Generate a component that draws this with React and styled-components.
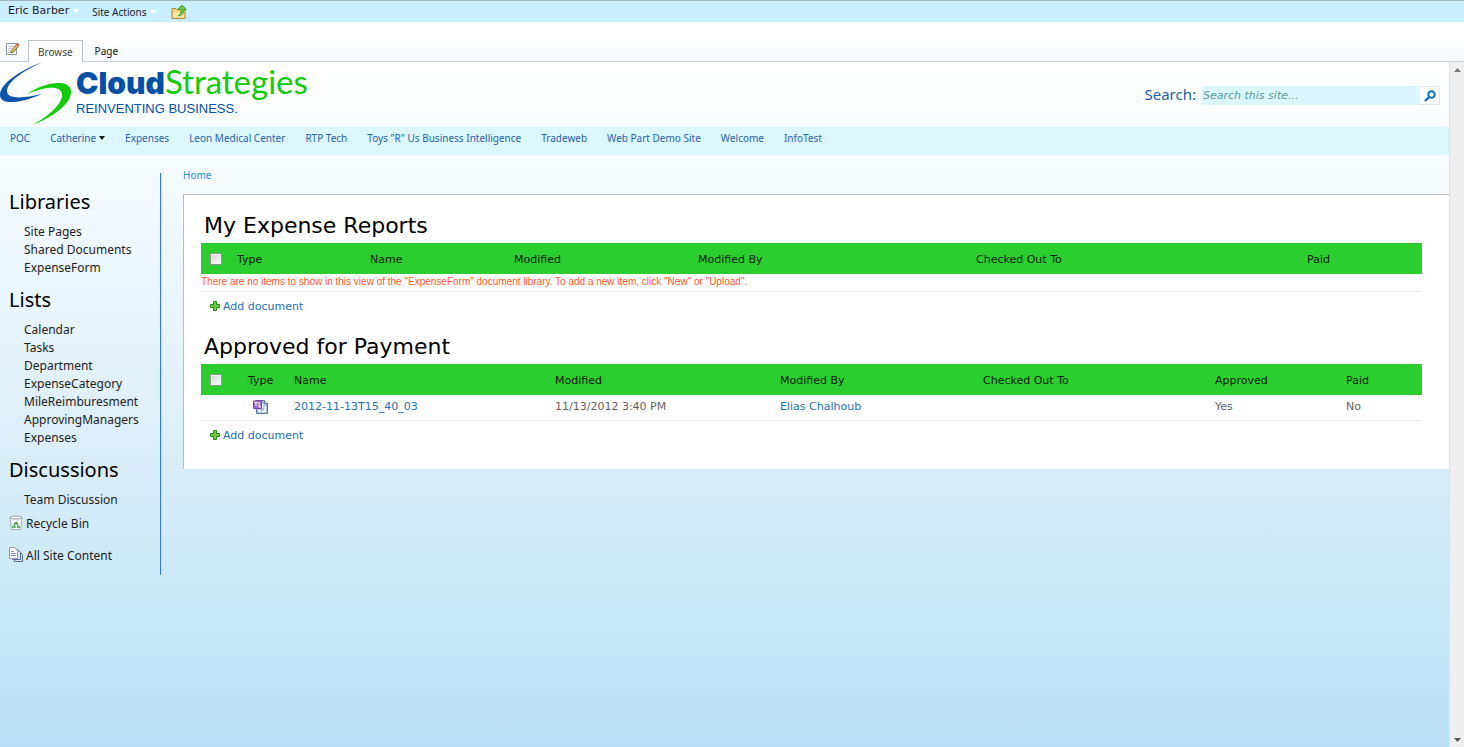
import React from "react";
import styled, { createGlobalStyle } from "styled-components";

const segoe = `"Noto Sans", "Open Sans", sans-serif`;
const verdana = `"DejaVu Sans", sans-serif`;

const GlobalStyle = createGlobalStyle`
  * { box-sizing: border-box; }
  body { margin: 0; font-family: ${segoe}; color: #1c1c1c; }
  a { text-decoration: none; color: inherit; }
  ul { list-style: none; margin: 0; padding: 0; }
  h2 { margin: 0; font-weight: 400; }
  svg { display: block; flex: none; }
`;

const Shell = styled.div`
  display: flex;
  flex-direction: column;
  min-height: 100vh;
`;

const TopBar = styled.header`
  display: flex;
  align-items: center;
  height: 22px;
  padding: 0 8px;
  gap: 13px;
  background: #c8eeff;
  border-top: 1px solid #a3b4bd;
`;

const MenuButton = styled.button`
  display: flex;
  align-items: center;
  gap: 4px;
  padding: ${(p) => (p.$wide ? "0 0 2px" : "0")};
  border: 0;
  background: none;
  color: #1d1d2b;
  font: ${(p) => (p.$wide ? `11px/16px ${verdana}` : `10px/16px ${segoe}`)};
  white-space: nowrap;
`;

const IconButton = styled.button`
  display: flex;
  padding: 0;
  border: 0;
  background: none;
`;

const UpButton = styled(IconButton)`
  padding-left: 2px;
`;

const Ribbon = styled.nav`
  display: flex;
  align-items: flex-end;
  height: 40px;
  padding-left: 5px;
  background: linear-gradient(#ffffff 40%, #f5f7f9);
  border-bottom: 1px solid #c9d2da;
`;

const EditSlot = styled.div`
  width: 23px;
  padding-bottom: 4px;
`;

const Tab = styled.button`
  height: 22px;
  padding: 1px 9px 0;
  margin-bottom: ${(p) => (p.$active ? "-1px" : "0")};
  margin-right: 2px;
  border: 1px solid ${(p) => (p.$active ? "#b9c1c9" : "transparent")};
  border-bottom: 0;
  background: ${(p) => (p.$active ? "#ffffff" : "none")};
  color: ${(p) => (p.$active ? "#444444" : "#111111")};
  font: 10px/18px ${segoe};
`;

const Body = styled.div`
  display: flex;
  flex: 1;
`;

const Page = styled.div`
  flex: 1;
  min-width: 0;
  background: linear-gradient(#ffffff 0, #f6fbff 16%, #d8edf9 60%, #b9e0f4 100%);
`;

const ScrollTrack = styled.div`
  display: flex;
  flex-direction: column;
  justify-content: space-between;
  align-items: center;
  width: 15px;
  padding: 6px 0 5px;
  background: #efefef;
  border-left: 1px solid #e0e3e6;
`;

const Masthead = styled.div`
  display: flex;
  justify-content: space-between;
  height: 65px;
  padding-right: 9px;
`;

const Brand = styled.a`
  display: flex;
  gap: 4px;
`;

const BrandText = styled.div`
  padding-top: 1px;
`;

const BrandName = styled.div`
  display: flex;
  align-items: baseline;
  height: 36px;
  font: 33px/36px Lato, sans-serif;
  color: #12cc0a;
`;

const BrandStrong = styled.span`
  font: 900 30px/36px Inter, sans-serif;
  color: #0450a4;
`;

const Tagline = styled.div`
  font: 13px/20px "Liberation Sans", sans-serif;
  color: #0450a4;
`;

const SearchForm = styled.form`
  display: flex;
  align-items: center;
  align-self: flex-start;
  padding-top: 20px;
`;

const SearchLabel = styled.label`
  margin-right: 6px;
  padding-bottom: 2px;
  font: 15px/24px ${segoe};
  color: #1f5fa8;
`;

const SearchBox = styled.input`
  width: 218px;
  height: 19px;
  padding: 0 1px;
  border: 0;
  border-radius: 0;
  background: #dbf6ff;
  font: italic 11px/19px ${verdana};
  &::placeholder { color: #5c9a9c; opacity: 1; }
`;

const SearchButton = styled.button`
  display: flex;
  align-items: center;
  justify-content: center;
  width: 20px;
  height: 19px;
  padding: 1px 0 0;
  border: 1px solid #e2e6e9;
  border-left: 0;
  background: #fafcfd;
`;

const SiteNav = styled.nav`
  display: flex;
  gap: 20px;
  height: 28px;
  padding: 0 10px;
  background: #dcf7ff;
  color: #2a62a8;
  font: 10px/22px ${segoe};
`;

const NavLink = styled.a`
  display: flex;
  align-items: center;
  gap: 3px;
  height: 22px;
  white-space: nowrap;
`;

const Columns = styled.div`
  display: flex;
  align-items: flex-start;
  gap: 22px;
  padding-top: 18px;
`;

const Sidebar = styled.aside`
  width: 161px;
  min-height: 402px;
  padding: 14px 0 0 9px;
  border-right: 1px solid #3b7fc0;
  box-shadow: 1px 0 0 #c4e0f4;
`;

const SideHeading = styled.h2`
  font: 20px/30px ${segoe};
  color: #000000;
`;

const SideList = styled.ul`
  padding: 6px 0 8px 15px;
  font: 12px/18px ${segoe};
`;

const SideItem = styled.li`
  white-space: nowrap;
`;

const SideTool = styled.a`
  display: flex;
  align-items: center;
  gap: 3px;
  height: 32px;
  font: 12px/18px ${segoe};
`;

const Tools = styled.div`
  margin-top: -9px;
`;

const Main = styled.main`
  flex: 1;
  min-width: 0;
`;

const Crumb = styled.a`
  display: block;
  height: 21px;
  font: 10px/4px ${segoe};
  color: #1c90d0;
`;

const Panel = styled.div`
  padding: 15px 27px 18px 17px;
  background: #ffffff;
  border-top: 1px solid #bcbcbc;
  border-left: 1px solid #bcbcbc;
`;

const WebPart = styled.section`
  margin-bottom: ${(p) => (p.$last ? "0" : "9px")};
`;

const PartTitle = styled.h2`
  height: 33px;
  padding-left: 3px;
  font: 22px/32px ${verdana};
  color: #000000;
`;

const Grid = styled.table`
  width: 100%;
  table-layout: fixed;
  border-collapse: collapse;
  font: 11px/16px ${verdana};
`;

const HeadCell = styled.th`
  height: 31px;
  padding: 3px 0 0 8px;
  background: #2ccd2e;
  color: #06210a;
  font-weight: 400;
  text-align: left;
`;

const CheckCell = styled(HeadCell)`
  padding: 1px 0 0 9px;
`;

const Cell = styled.td`
  height: 26px;
  padding: 0 0 1px 8px;
  border-bottom: 1px solid #e9e9e9;
  color: ${(p) => (p.$link ? "#2470b3" : "#5f5f5f")};
`;

const TypeCell = styled(Cell)`
  padding: 0 0 0 13px;
`;

const EmptyCell = styled.td`
  height: 17px;
  padding: 0;
  border-bottom: 1px solid #e9e9e9;
  color: #ff5a2a;
  font: 10px/16px "Liberation Sans", sans-serif;
`;

const Check = styled.input`
  display: block;
  appearance: none;
  width: 12px;
  height: 12px;
  margin: 0;
  border: 1px solid #8d938f;
  background: linear-gradient(135deg, #cfd3d8, #fbfbfb);
  box-shadow: inset 0 0 0 1px #f4f4f4;
`;

const AddLink = styled.a`
  display: flex;
  align-items: center;
  gap: 3px;
  width: max-content;
  height: 30px;
  padding-left: 9px;
  color: #2470b3;
  font: 11px/16px ${verdana};
`;

const Caret = ({ color }) => (
  <svg width="6" height="4" viewBox="0 0 6 4"><path d="M0 0h6L3 4z" fill={color} /></svg>
);

const FolderUp = () => (
  <svg width="16" height="16" viewBox="0 0 16 16">
    <path d="M1 4.500h4l1 1h8v9H1z" fill="#f3cf78" stroke="#b08a3c" />
    <path d="M2 8h11v6H2z" fill="#fbe3a0" />
    <path d="M11 1l4.500 4.500H13c0 4-2 6-6 6.500 2-1.500 3-3 3-6.500H6.500z" fill="#6cc844" stroke="#3f9a2e" strokeWidth=".8" />
  </svg>
);

const EditPage = () => (
  <svg width="16" height="16" viewBox="0 0 16 16">
    <path d="M1.500 2.500h10v11h-10z" fill="#ffffff" stroke="#8b9bb0" />
    <path d="M3 5.500h6M3 7.500h4M3 9.500h3M3 11.500h3" stroke="#c2cddb" />
    <path d="M11.500 3.500l2 1.500-5 6-2.500 1 .5-2.500z" fill="#f3c04c" stroke="#59503c" strokeWidth=".8" />
    <path d="M11.500 3.500l1-1.500 2 1.500-1 1.500z" fill="#d9534a" />
  </svg>
);

const LogoMark = () => (
  <svg width="72" height="64" viewBox="0 0 72 64">
    <path d="M43 0C20 8 0 22 0 33c0 11 22 8 42-1C25 36 7 38 7 29 7 20 24 8 43 0z" fill="#0b55a8" />
    <path d="M27 32C44 20 70 16 71 29c1 11-15 25-39 34C46 56 62 43 62 33c0-11-18-8-35-1z" fill="#14cc0c" />
  </svg>
);

const Magnifier = () => (
  <svg width="12" height="12" viewBox="0 0 12 12" fill="none" stroke="#1070b8">
    <circle cx="7.500" cy="4.500" r="3.200" strokeWidth="2" />
    <path d="M5 7L1 11" strokeWidth="2.400" />
  </svg>
);

const Plus = () => (
  <svg width="10" height="12" viewBox="0 0 10 12">
    <path d="M3.500 .5h3v3h3v3h-3v3h-3v-3h-3v-3h3z" fill="#6ccb45" stroke="#2b8a1c" />
  </svg>
);

const RecycleBin = () => (
  <svg width="14" height="18" viewBox="0 0 14 18">
    <path d="M1 2.500l1.500 12h9L13 2.500z" fill="#f1f5f7" stroke="#a3afb9" />
    <ellipse cx="7" cy="2.500" rx="6" ry="1.500" fill="#ffffff" stroke="#93a0ab" />
    <path d="M7 7l3 5H4z" fill="none" stroke="#3e9b3d" strokeWidth="1.500" strokeDasharray="3.500 1" />
  </svg>
);

const Documents = () => (
  <svg width="14" height="18" viewBox="0 0 14 18">
    <path d="M5.500 4.500h5l3 3v7h-8z" fill="#dce5f2" stroke="#56698c" />
    <path d="M3.500 2.500h5l3 3v7h-8z" fill="#dce5f2" stroke="#56698c" />
    <path d="M.5.500h5l3 3v8h-8z" fill="#ffffff" stroke="#8fa0ba" />
    <path d="M2 4.500h3M2 6.500h5M2 8.500h5" stroke="#6f9bd0" />
  </svg>
);

const FormFile = () => (
  <svg width="16" height="16" viewBox="0 0 16 16">
    <path d="M3.500 1.500h8l3 3v10h-11z" fill="#a9bfe3" stroke="#5b76a6" />
    <path d="M11.500 1.500v3h3" fill="#ffffff" stroke="#5b76a6" />
    <path d="M9.500 5v4M12 7v5M5 11.500h2v2M9 12.500h4" fill="none" stroke="#f7faff" strokeWidth="1.500" />
    <path d="M.500 2.500l2-1h6v8h-8z" fill="#a06cc6" stroke="#7c48a8" />
    <path d="M1.500 3.500h3M3 4v3M6 3v5h2" fill="none" stroke="#ffffff" />
  </svg>
);

const navItems = ["POC", "Catherine", "Expenses", "Leon Medical Center", "RTP Tech", 'Toys "R" Us Business Intelligence', "Tradeweb", "Web Part Demo Site", "Welcome", "InfoTest"];

const sideGroups = [
  { title: "Libraries", items: ["Site Pages", "Shared Documents", "ExpenseForm"] },
  { title: "Lists", items: ["Calendar", "Tasks", "Department", "ExpenseCategory", "MileReimburesment", "ApprovingManagers", "Expenses"] },
  { title: "Discussions", items: ["Team Discussion"] },
];

function ListTable({ label, columns, widths, children }) {
  return (
    <Grid>
      <colgroup>{widths.map((w, i) => <col key={i} width={w} />)}</colgroup>
      <thead>
        <tr>
          <CheckCell><Check type="checkbox" aria-label={`Select all in ${label}`} /></CheckCell>
          {columns.map((c) => <HeadCell key={c} scope="col">{c}</HeadCell>)}
        </tr>
      </thead>
      <tbody>{children}</tbody>
    </Grid>
  );
}

export default function App() {
  return (
    <Shell>
      <GlobalStyle />
      <TopBar>
        <MenuButton $wide>Eric Barber<Caret color="#ffffff" /></MenuButton>
        <MenuButton>Site Actions<Caret color="#ffffff" /></MenuButton>
        <UpButton aria-label="Navigate up"><FolderUp /></UpButton>
      </TopBar>
      <Ribbon>
        <EditSlot><IconButton aria-label="Edit page"><EditPage /></IconButton></EditSlot>
        <Tab $active>Browse</Tab>
        <Tab>Page</Tab>
      </Ribbon>
      <Body>
        <Page>
          <Masthead>
            <Brand href="#">
              <LogoMark />
              <BrandText>
                <BrandName><BrandStrong>Cloud</BrandStrong>Strategies</BrandName>
                <Tagline>REINVENTING BUSINESS.</Tagline>
              </BrandText>
            </Brand>
            <SearchForm>
              <SearchLabel htmlFor="site-search">Search:</SearchLabel>
              <SearchBox id="site-search" placeholder="Search this site..." />
              <SearchButton type="button" aria-label="Search"><Magnifier /></SearchButton>
            </SearchForm>
          </Masthead>
          <SiteNav>
            {navItems.map((n) => (
              <NavLink key={n} href="#">{n}{n === "Catherine" && <Caret color="#111111" />}</NavLink>
            ))}
          </SiteNav>
          <Columns>
            <Sidebar>
              {sideGroups.map((g) => (
                <React.Fragment key={g.title}>
                  <SideHeading>{g.title}</SideHeading>
                  <SideList>
                    {g.items.map((t) => <SideItem key={t}><a href="#">{t}</a></SideItem>)}
                  </SideList>
                </React.Fragment>
              ))}
              <Tools>
                <SideTool href="#"><RecycleBin />Recycle Bin</SideTool>
                <SideTool href="#"><Documents />All Site Content</SideTool>
              </Tools>
            </Sidebar>
            <Main>
              <Crumb href="#">Home</Crumb>
              <Panel>
                <WebPart>
                  <PartTitle>My Expense Reports</PartTitle>
                  <ListTable label="My Expense Reports" widths={[28, 133, 144, 184, 278, 331, 123]} columns={["Type", "Name", "Modified", "Modified By", "Checked Out To", "Paid"]}>
                    <tr>
                      <EmptyCell colSpan={7}>There are no items to show in this view of the "ExpenseForm" document library. To add a new item, click "New" or "Upload".</EmptyCell>
                    </tr>
                  </ListTable>
                  <AddLink href="#"><Plus />Add document</AddLink>
                </WebPart>
                <WebPart $last>
                  <PartTitle>Approved for Payment</PartTitle>
                  <ListTable label="Approved for Payment" widths={[39, 46, 261, 225, 203, 232, 131, 84]} columns={["Type", "Name", "Modified", "Modified By", "Checked Out To", "Approved", "Paid"]}>
                    <tr>
                      <Cell />
                      <TypeCell><FormFile /></TypeCell>
                      <Cell $link><a href="#">2012-11-13T15_40_03</a></Cell>
                      <Cell>11/13/2012 3:40 PM</Cell>
                      <Cell $link><a href="#">Elias Chalhoub</a></Cell>
                      <Cell />
                      <Cell>Yes</Cell>
                      <Cell>No</Cell>
                    </tr>
                  </ListTable>
                  <AddLink href="#"><Plus />Add document</AddLink>
                </WebPart>
              </Panel>
            </Main>
          </Columns>
        </Page>
        <ScrollTrack>
          <svg width="7" height="4" viewBox="0 0 7 4"><path d="M0 4h7L3.500 0z" fill="#777777" /></svg>
          <svg width="7" height="4" viewBox="0 0 7 4"><path d="M0 0h7L3.500 4z" fill="#555555" /></svg>
        </ScrollTrack>
      </Body>
    </Shell>
  );
}
